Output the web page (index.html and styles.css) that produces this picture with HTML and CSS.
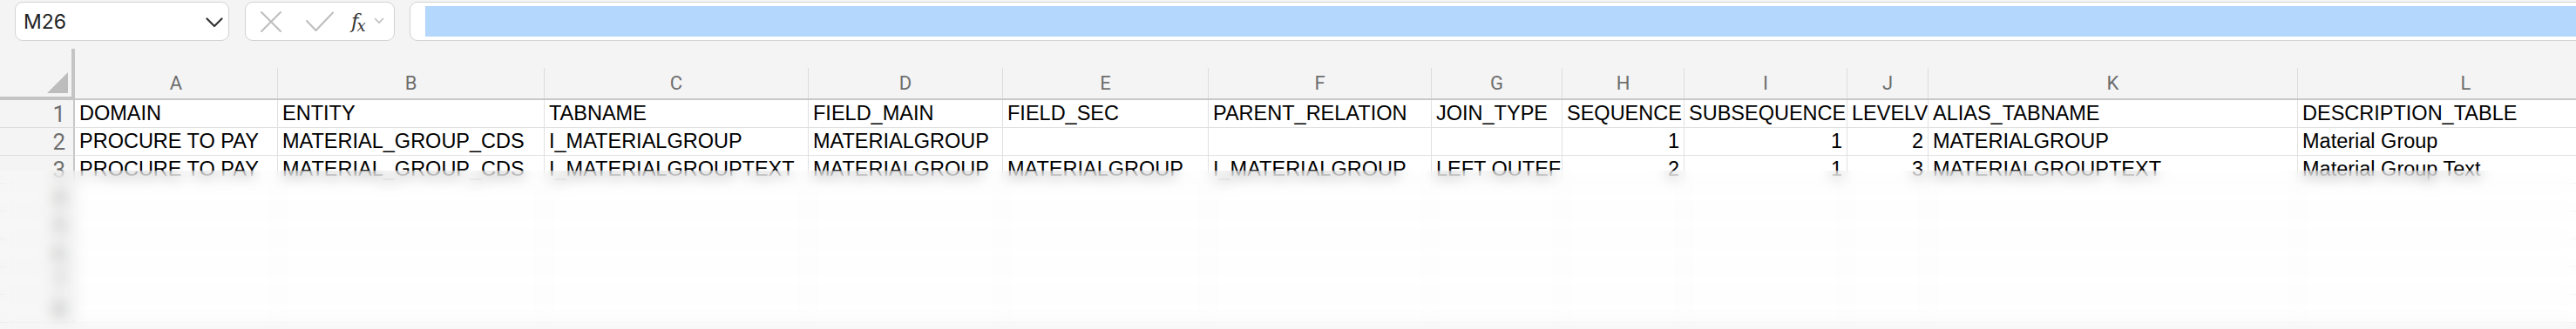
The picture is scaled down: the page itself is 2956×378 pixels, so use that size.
FILE: index.html
```html
<!DOCTYPE html>
<html lang="en">
<head>
    <meta charset="UTF-8">
    <title>Sheet</title>
    <link rel="stylesheet" href="styles.css">
</head>
<body>
    <div class="toolbar">
        <div class="namebox">
            <span class="cellref">M26</span>
            <svg class="chevron" width="20" height="12" viewBox="0 0 20 12"><path d="M1.5 1.5 L10 10 L18.5 1.5" fill="none" stroke="#333" stroke-width="2.2" stroke-linecap="round" stroke-linejoin="round"/></svg>
        </div>
        <div class="fxbox">
            <svg class="icon-x" width="26" height="26" viewBox="0 0 26 26"><path d="M2 2 L24 24 M24 2 L2 24" stroke="#bdbdbd" stroke-width="2" stroke-linecap="round"/></svg>
            <svg class="icon-check" width="34" height="24" viewBox="0 0 34 24"><path d="M2 11 L12.5 22 L32 1.5" fill="none" stroke="#bdbdbd" stroke-width="2" stroke-linecap="round" stroke-linejoin="round"/></svg>
            <span class="fx"><i>f</i><span class="fx-x">x</span></span>
            <svg class="icon-down" width="12" height="8" viewBox="0 0 12 8"><path d="M1.5 1.5 L6 6 L10.5 1.5" fill="none" stroke="#bdbdbd" stroke-width="1.6" stroke-linecap="round"/></svg>
        </div>
        <div class="formula">
            <div class="selection"></div>
        </div>
    </div>

    <div class="sheet">
        <div class="corner"><span class="tri"></span></div>
        <div class="colhead"><span>A</span></div>
        <div class="colhead"><span>B</span></div>
        <div class="colhead"><span>C</span></div>
        <div class="colhead"><span>D</span></div>
        <div class="colhead"><span>E</span></div>
        <div class="colhead"><span>F</span></div>
        <div class="colhead"><span>G</span></div>
        <div class="colhead"><span>H</span></div>
        <div class="colhead"><span>I</span></div>
        <div class="colhead"><span>J</span></div>
        <div class="colhead"><span>K</span></div>
        <div class="colhead"><span>L</span></div>

        <div class="rowhead">1</div>
        <div class="cell">DOMAIN</div>
        <div class="cell">ENTITY</div>
        <div class="cell">TABNAME</div>
        <div class="cell">FIELD_MAIN</div>
        <div class="cell">FIELD_SEC</div>
        <div class="cell">PARENT_RELATION</div>
        <div class="cell">JOIN_TYPE</div>
        <div class="cell">SEQUENCE</div>
        <div class="cell">SUBSEQUENCE</div>
        <div class="cell">LEVELV</div>
        <div class="cell">ALIAS_TABNAME</div>
        <div class="cell">DESCRIPTION_TABLE</div>

        <div class="rowhead">2</div>
        <div class="cell">PROCURE TO PAY</div>
        <div class="cell">MATERIAL_GROUP_CDS</div>
        <div class="cell">I_MATERIALGROUP</div>
        <div class="cell">MATERIALGROUP</div>
        <div class="cell"></div>
        <div class="cell"></div>
        <div class="cell"></div>
        <div class="cell num">1</div>
        <div class="cell num">1</div>
        <div class="cell num">2</div>
        <div class="cell">MATERIALGROUP</div>
        <div class="cell">Material Group</div>

        <div class="rowhead">3</div>
        <div class="cell">PROCURE TO PAY</div>
        <div class="cell">MATERIAL_GROUP_CDS</div>
        <div class="cell">I_MATERIALGROUPTEXT</div>
        <div class="cell">MATERIALGROUP</div>
        <div class="cell">MATERIALGROUP</div>
        <div class="cell">I_MATERIALGROUP</div>
        <div class="cell">LEFT OUTEF</div>
        <div class="cell num">2</div>
        <div class="cell num">1</div>
        <div class="cell num">3</div>
        <div class="cell">MATERIALGROUPTEXT</div>
        <div class="cell">Material Group Text</div>
    </div>

    <div class="blur-overlay"></div>

    <script>
        // empty rows below the data, they only show through the blur
        const sheet = document.querySelector('.sheet');
        for (let r = 4; r <= 8; r++) {
            const head = document.createElement('div');
            head.className = 'rowhead';
            head.textContent = r;
            sheet.appendChild(head);
            for (let c = 0; c < 12; c++) {
                const cell = document.createElement('div');
                cell.className = 'cell';
                sheet.appendChild(cell);
            }
        }
    </script>
</body>
</html>
```

FILE: styles.css
```css
body {
    margin: 0;
    padding: 0;
    width: 2956px;
    height: 378px;
    overflow: hidden;
    position: relative;
    background-color: #f4f4f4;
    font-family: "Liberation Sans", Arial, sans-serif;
}

/* top bar: name box, fx buttons, formula input */
.toolbar {
    display: flex;
    height: 45px;
    padding: 2px 0 0 17px;
}

.namebox,
.fxbox,
.formula {
    box-sizing: border-box;
    height: 45px;
    background-color: #fff;
    border: 1.5px solid #d3d3d3;
    border-radius: 9px;
}

.namebox {
    width: 246px;
    display: flex;
    align-items: center;
    justify-content: space-between;
    padding: 0 6px 0 9px;
}

.cellref {
    font-family: Inter, "Noto Sans", sans-serif;
    font-size: 23px;
    color: #222;
}

.chevron {
    margin-top: 2px;
}

.fxbox {
    width: 172px;
    margin-left: 18px;
    display: flex;
    align-items: center;
    padding-left: 16px;
}

.icon-check {
    margin-left: 26px;
}

.fx {
    margin-left: 19px;
    font-family: "DejaVu Serif", "Liberation Serif", serif;
    font-size: 23px;
    color: #333;
    line-height: 1;
    display: flex;
    align-items: flex-end;
}

.fx i {
    font-style: italic;
}

.fx-x {
    font-style: italic;
    font-size: 18px;
    margin-left: -2px;
    position: relative;
    top: 3px;
}

.icon-down {
    margin-left: 9px;
    margin-top: -2px;
}

.formula {
    flex: 1;
    margin-left: 17px;
    margin-right: -30px;
    padding: 4px 0 4px 17px;
}

.selection {
    height: 100%;
    background-color: #b4d7fe;
}

/* grid */
.sheet {
    display: grid;
    grid-template-columns: 86px 233px 306px 303px 223px 236px 256px 150px 140px 187px 93px 424px 386px;
    grid-template-rows: 59px;
    grid-auto-rows: 32px;
    margin-top: 9px;
}

.corner {
    box-sizing: border-box;
    border-right: 4px solid #c4c4c4;
    border-bottom: 4px solid #c4c4c4;
    position: relative;
}

.corner .tri {
    position: absolute;
    right: 4px;
    bottom: 4px;
    width: 0;
    height: 0;
    border-left: 24px solid transparent;
    border-bottom: 24px solid #bdbdbd;
}

.colhead {
    display: flex;
    align-items: flex-end;
    border-bottom: 2px solid #c8c8c8;
}

.colhead span {
    box-sizing: border-box;
    width: 100%;
    height: 35px;
    border-right: 1px solid #dcdcdc;
    text-align: center;
    font-family: Roboto, "Liberation Sans", sans-serif;
    font-size: 22px;
    line-height: 35px;
    color: #6e6e6e;
}

.rowhead {
    box-sizing: border-box;
    border-right: 2px solid #c8c8c8;
    border-bottom: 1px solid #dcdcdc;
    padding-right: 9px;
    text-align: right;
    font-family: Roboto, "Liberation Sans", sans-serif;
    font-size: 26px;
    line-height: 32px;
    color: #6e6e6e;
}

.cell {
    box-sizing: border-box;
    background-color: #fff;
    border-right: 1px solid #e1e1e1;
    border-bottom: 1px solid #e1e1e1;
    padding: 0 5px;
    font-size: 23.5px;
    line-height: 31px;
    color: #000;
    white-space: nowrap;
    overflow: hidden;
}

.cell.num {
    text-align: right;
}

/* frosted fade over the lower rows */
.blur-overlay {
    position: absolute;
    left: 0;
    right: 0;
    top: 196px;
    bottom: 0;
    background-color: rgba(255, 255, 255, 0.25);
    backdrop-filter: blur(8px);
}
```
